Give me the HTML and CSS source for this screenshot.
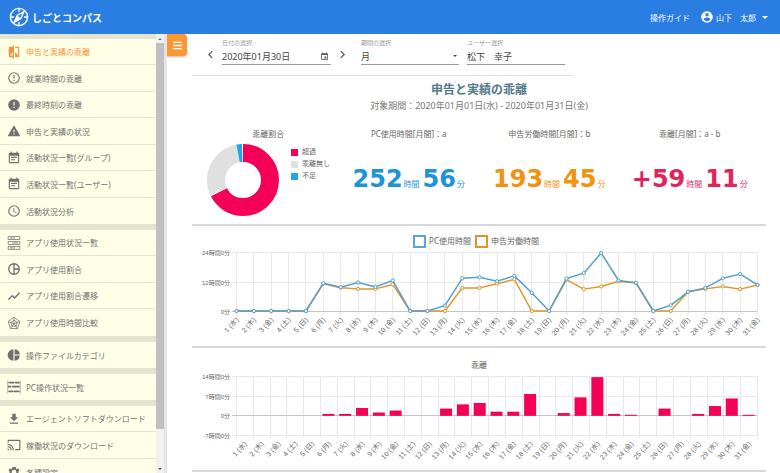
FILE: index.html
```html
<!DOCTYPE html>
<html lang="ja">
<head>
<meta charset="utf-8">
<meta name="viewport" content="width=device-width, initial-scale=1">
<title>しごとコンパス</title>
<link rel="stylesheet" href="styles.css">
</head>
<body>
<header class="topbar">
  <a class="brand" href="#">
    <svg class="brand-icon" viewBox="0 0 20 20" aria-hidden="true">
      <circle cx="10" cy="10" r="8.6" fill="none" stroke="#fff" stroke-width="1.4"/>
      <path d="M10 1v4M10 15v4M1 10h4M15 10h4" stroke="#fff" stroke-width="1.3"/>
      <path d="M15 4.6 11.8 11.6 5 15.4 8.2 8.4Z" fill="#2a7de1" stroke="#fff" stroke-width="1.3" stroke-linejoin="round"/>
      <path d="M8.2 8.4 11.8 11.6 5 15.4Z" fill="#fff"/>
    </svg>
    <span>しごとコンパス</span>
  </a>
  <nav class="account">
    <a href="#">操作ガイド</a>
    <button class="user" type="button">
      <svg class="user-icon" viewBox="0 0 24 24" aria-hidden="true"><path fill="#fff" d="M12 2a10 10 0 1 0 0 20 10 10 0 0 0 0-20zm0 3a3 3 0 1 1 0 6 3 3 0 0 1 0-6zm0 14.200a7.200 7.200 0 0 1-6-3.220c.03-1.990 4-3.080 6-3.080s5.970 1.090 6 3.080a7.200 7.200 0 0 1-6 3.220z"/></svg>
      <span>山下　太郎</span>
      <span class="caret"></span>
    </button>
  </nav>
</header>

<div class="layout">
  <nav class="sidebar">
    <ul class="group">
      <li><a class="active" href="#"><svg class="icon" viewBox="0 0 24 24"><path d="M10 3H5a2 2 0 0 0-2 2v14c0 1.100.9 2 2 2h5v2h2V1h-2v2zm0 15H5l5-6v6zm9-15h-5v2h5v13l-5-6v9h5a2 2 0 0 0 2-2V5a2 2 0 0 0-2-2z"/></svg>申告と実績の乖離</a></li>
      <li><a href="#"><svg class="icon" viewBox="0 0 24 24"><path d="M11 15h2v2h-2zm0-8h2v6h-2zm1-5a10 10 0 1 0 0 20 10 10 0 0 0 0-20zm0 18a8 8 0 1 1 0-16 8 8 0 0 1 0 16z"/></svg>就業時間の乖離</a></li>
      <li><a href="#"><svg class="icon" viewBox="0 0 24 24"><path d="M12 2a10 10 0 1 0 0 20 10 10 0 0 0 0-20zm1 15h-2v-2h2v2zm0-4h-2V7h2v6z"/></svg>最終時刻の乖離</a></li>
      <li><a href="#"><svg class="icon" viewBox="0 0 24 24"><path d="M1 21h22L12 2 1 21zm12-3h-2v-2h2v2zm0-4h-2v-4h2v4z"/></svg>申告と実績の状況</a></li>
      <li><a href="#"><svg class="icon" viewBox="0 0 24 24"><path d="M17 10H7v2h10v-2zm2-7h-1V1h-2v2H8V1H6v2H5a2 2 0 0 0-2 2v14c0 1.100.9 2 2 2h14a2 2 0 0 0 2-2V5a2 2 0 0 0-2-2zm0 16H5V8h14v11zm-5-5H7v2h7v-2z"/></svg>活動状況一覧(グループ)</a></li>
      <li><a href="#"><svg class="icon" viewBox="0 0 24 24"><path d="M17 10H7v2h10v-2zm2-7h-1V1h-2v2H8V1H6v2H5a2 2 0 0 0-2 2v14c0 1.100.9 2 2 2h14a2 2 0 0 0 2-2V5a2 2 0 0 0-2-2zm0 16H5V8h14v11zm-5-5H7v2h7v-2z"/></svg>活動状況一覧(ユーザー)</a></li>
      <li><a href="#"><svg class="icon" viewBox="0 0 24 24"><path d="M12 2a10 10 0 1 0 0 20 10 10 0 0 0 0-20zm0 18a8 8 0 1 1 0-16 8 8 0 0 1 0 16zm.5-13H11v6l5.250 3.150.75-1.230-4.500-2.670z"/></svg>活動状況分析</a></li>
    </ul>
    <ul class="group">
      <li><a href="#"><svg class="icon line" viewBox="0 0 24 24"><path d="M2 1h20v5H2zM2 9.500h20v5H2zM2 18h20v5H2zM5 3.500h9M9 12h10M5 20.500h9"/></svg>アプリ使用状況一覧</a></li>
      <li><a href="#"><svg class="icon line thick" viewBox="0 0 24 24"><path d="M12 3a9 9 0 1 0 0 18 9 9 0 0 0 0-18zM12 3v18M12 12h9"/></svg>アプリ使用割合</a></li>
      <li><a href="#"><svg class="icon line thick" viewBox="0 0 24 24"><path d="M2.500 18 9 11.500l4 4L21.500 6.500"/></svg>アプリ使用割合遷移</a></li>
      <li><a href="#"><svg class="icon line" viewBox="0 0 24 24"><path d="M12 2 22 9.500 18 21.500H6L2 9.500ZM12 7l5.500 4-2 6.500h-7l-2-6.500ZM12 2v11M22 9.500 12 13l6 8.500M2 9.500 12 13l-6 8.500"/></svg>アプリ使用時間比較</a></li>
    </ul>
    <ul class="group">
      <li><a href="#"><svg class="icon" viewBox="0 0 24 24"><path d="M11 2v20a10 10 0 0 1 0-20zm2 0v9h9a10 10 0 0 0-9-9zm0 11v9a10 10 0 0 0 9-9z"/></svg>操作ファイルカテゴリ</a></li>
    </ul>
    <ul class="group">
      <li><a href="#"><svg class="icon" viewBox="0 0 24 24"><path d="M1 1h1v22H1zM22 1h1v22h-1zM4 3h8v3H4zM14 3h7v3h-7zM2 10h5v3H2zM9 10h12v3H9zM4 18h6v3H4zM12 18h8v3h-8zM2 4h20v1H2zM2 11h20v1H2zM2 19h20v1H2z"/></svg>PC操作状況一覧</a></li>
    </ul>
    <ul class="group">
      <li><a href="#"><svg class="icon" viewBox="0 0 24 24"><path d="M19 9h-4V3H9v6H5l7 7 7-7zM5 18v2h14v-2H5z"/></svg>エージェントソフトダウンロード</a></li>
      <li><a href="#"><svg class="icon" viewBox="0 0 24 24"><path d="M21 3H3a2 2 0 0 0-2 2v3h2V5h18v14h-7v2h7a2 2 0 0 0 2-2V5a2 2 0 0 0-2-2zM1 18v3h3a3 3 0 0 0-3-3zm0-4v2a5 5 0 0 1 5 5h2a7 7 0 0 0-7-7zm0-4v2a9 9 0 0 1 9 9h2A11 11 0 0 0 1 10z"/></svg>稼働状況のダウンロード</a></li>
      <li><a href="#"><svg class="icon" viewBox="0 0 24 24"><path d="M19.400 13c.1-.7.100-1.300 0-2l2.100-1.600-2-3.500-2.500 1a7 7 0 0 0-1.700-1L15 3.300h-6l-.3 2.600a7 7 0 0 0-1.700 1l-2.500-1-2 3.500L4.600 11a8 8 0 0 0 0 2l-2.100 1.600 2 3.500 2.500-1 1.700 1 .3 2.600h6l.3-2.600 1.700-1 2.500 1 2-3.500zM12 16a4 4 0 1 1 0-8 4 4 0 0 1 0 8z"/></svg>各種設定</a></li>
    </ul>
  </nav>
  <div class="scrollbar" aria-hidden="true">
    <span class="arrow up"></span>
    <span class="thumb"></span>
    <span class="arrow down"></span>
  </div>

  <main class="main">
    <button class="menu-toggle" type="button" aria-label="メニュー"><svg viewBox="0 0 12 10"><path d="M1 1.500h10M1 5h10M1 8.500h10" stroke="#fff" stroke-width="1.500"/></svg></button>

    <form class="filters">
      <button class="step" type="button" aria-label="前の日"><svg viewBox="0 0 6 10"><path d="M5 1 1 5l4 4"/></svg></button>
      <div class="field">
        <label for="date">日付の選択</label>
        <div class="control">
          <input id="date" type="text" value="2020年01月30日">
          <svg class="calendar" viewBox="0 0 24 24"><path d="M19 3h-1V1h-2v2H8V1H6v2H5a2 2 0 0 0-2 2v14c0 1.100.9 2 2 2h14a2 2 0 0 0 2-2V5a2 2 0 0 0-2-2zm0 16H5V8h14v11zM12 12h5v5h-5z"/></svg>
        </div>
      </div>
      <button class="step" type="button" aria-label="次の日"><svg viewBox="0 0 6 10"><path d="M1 1l4 4-4 4"/></svg></button>
      <div class="field period">
        <label for="period">期間の選択</label>
        <div class="control">
          <select id="period"><option>月</option></select>
          <span class="caret"></span>
        </div>
      </div>
      <div class="field member">
        <label for="member">ユーザー選択</label>
        <div class="control"><input id="member" type="text" value="松下　幸子"></div>
      </div>
    </form>

    <div class="heading">
      <h1>申告と実績の乖離</h1>
      <p>対象期間：2020年01月01日(水) - 2020年01月31日(金)</p>
    </div>

    <section class="summary">
      <div class="kpi">
        <h2>乖離割合</h2>
        <div class="ratio">
          <svg class="donut" viewBox="0 0 72 72" role="img" aria-label="乖離割合">
            <g fill="none" stroke-width="18" transform="rotate(-90 36 36)">
              <circle cx="36" cy="36" r="27" pathLength="200" stroke="#f50057" stroke-dasharray="135 200"/>
              <circle cx="36" cy="36" r="27" pathLength="200" stroke="#e0e0e0" stroke-dasharray="58 200" stroke-dashoffset="-136"/>
              <circle cx="36" cy="36" r="27" pathLength="200" stroke="#1ea7ee" stroke-dasharray="5 200" stroke-dashoffset="-194"/>
            </g>
          </svg>
          <ul class="ratio-legend">
            <li class="over">超過</li>
            <li class="none">乖離無し</li>
            <li class="under">不足</li>
          </ul>
        </div>
      </div>
      <div class="kpi">
        <h2>PC使用時間[月間]：a</h2>
        <p class="value blue"><b>252</b>時間<b>56</b>分</p>
      </div>
      <div class="kpi">
        <h2>申告労働時間[月間]：b</h2>
        <p class="value orange"><b>193</b>時間<b>45</b>分</p>
      </div>
      <div class="kpi">
        <h2>乖離[月間]：a - b</h2>
        <p class="value pink"><b>+59</b>時間<b>11</b>分</p>
      </div>
    </section>

    <section class="panel">
      <ul class="series">
        <li class="pc">PC使用時間</li>
        <li class="reported">申告労働時間</li>
      </ul>
      <svg class="chart" id="hours" viewBox="0 0 574 90"></svg>
    </section>

    <section class="panel">
      <h2>乖離</h2>
      <svg class="chart" id="gap" viewBox="0 0 574 90"></svg>
    </section>
  </main>
</div>
<script src="charts.js"></script>
</body>
</html>
```
FILE: styles.css
```css
* { box-sizing: border-box; }

body {
  margin: 0;
  height: 100vh;
  display: flex;
  flex-direction: column;
  overflow: hidden;
  background: #fff;
  color: #666;
  font-family: "Noto Sans", "Noto Sans CJK JP", sans-serif;
  font-size: 8px;
}

h1, h2, p, ul { margin: 0; padding: 0; }
ul { list-style: none; }
a { color: inherit; text-decoration: none; }
button, input, select {
  margin: 0;
  padding: 0;
  border: 0;
  background: none;
  color: inherit;
  font: inherit;
}

.topbar {
  flex: none;
  height: 34px;
  padding: 0 12px 0 9px;
  display: flex;
  align-items: center;
  justify-content: space-between;
  background: #2a7de1;
  color: #fff;
}
.brand {
  display: flex;
  align-items: center;
  gap: 3px;
  font-size: 10px;
  font-weight: 700;
}
.brand-icon { width: 20px; height: 20px; }
.account { display: flex; align-items: center; gap: 10px; }
.user { display: flex; align-items: center; gap: 2px; }
.user-icon { width: 14px; height: 14px; }
.caret {
  border: 3px solid transparent;
  border-top-color: currentColor;
  border-bottom: 0;
}
.user .caret { margin-left: 4px; }

.layout { flex: 1; min-height: 0; display: flex; }

.sidebar {
  flex: none;
  width: 156px;
  padding-top: 5px;
  overflow: hidden;
  background: #e4e4cf;
}
.group { margin-bottom: 6px; background: #ffffe8; color: #707070; }
.group li { height: 26px; border-bottom: 1px solid #e6e6d4; }
.group li:nth-child(even) { height: 27px; }
.group li:last-child { border-bottom: 0; }
.group a {
  height: 100%;
  padding-left: 7px;
  display: flex;
  align-items: center;
  gap: 5px;
  white-space: nowrap;
}
.group .active { color: #f7923a; }
.icon { width: 14px; height: 14px; fill: currentColor; }
.icon.line { fill: none; stroke: currentColor; stroke-width: 1.3; }
.icon.thick { stroke-width: 2.3; }

.scrollbar {
  flex: none;
  width: 11px;
  display: flex;
  flex-direction: column;
  background: #f1f1f1;
  border-right: 3px solid #e4e4e4;
}
.arrow { height: 9px; display: grid; place-items: center; }
.arrow::before { content: ""; border: 2px solid transparent; }
.up::before { border-bottom-color: #4a7fc0; border-top: 0; }
.down::before { border-top-color: #555; border-bottom: 0; }
.thumb { height: 88%; background: #c1bfc1; }
.down { margin-top: auto; }

.main {
  position: relative;
  flex: 1;
  min-width: 0;
  padding: 0 14px 0 25px;
  overflow: hidden;
}
.menu-toggle {
  position: absolute;
  top: 0;
  left: 0;
  width: 20px;
  height: 22px;
  display: grid;
  place-items: center;
  border-radius: 0 4px 4px 0;
  background: #fb9734;
  box-shadow: 0 1px 2px #0004;
}
.menu-toggle svg { width: 11px; height: 9px; }

.filters {
  width: 382px;
  max-width: 100%;
  padding: 5px 9px 10px 14px;
  display: flex;
  align-items: flex-end;
  border-bottom: 1px solid #e4e4e4;
  color: #444;
}
.step { width: 9px; height: 19px; text-align: center; }
.step svg { width: 5px; height: 9px; fill: none; stroke: #555; stroke-width: 1.5; }
.field { flex: 1; min-width: 0; margin: 0 7px; }
.field label { display: block; font-size: 6px; line-height: 9px; color: #999; }
.field.period { margin: 0 8px 0 14px; flex: none; width: 98px; }
.field.member { margin: 0; flex: none; width: 98px; }
.control {
  height: 17px;
  padding-right: 2px;
  display: flex;
  align-items: center;
  border-bottom: 1px solid #999;
  font-size: 9px;
}
.control input, .control select { flex: 1; min-width: 0; appearance: none; }
.control .caret { border-width: 2px; border-bottom: 0; }
.calendar { width: 9px; height: 9px; fill: #555; }

.heading { padding: 5px 0 15px; text-align: center; }
h1 { font-size: 12px; line-height: 18px; color: #54788c; }
.heading p { font-size: 9px; line-height: 13px; color: #777; }
h2 { font-size: 8px; line-height: 14px; font-weight: 400; text-align: center; }

.summary {
  padding: 0 6px 8px;
  display: grid;
  grid-template-columns: repeat(4, 1fr);
  border-bottom: 2px solid #d8d8d8;
}
.ratio { padding: 3px 0 0 9px; display: flex; gap: 12px; }
.donut { width: 72px; height: 72px; }
.ratio-legend { padding-top: 2px; font-size: 7px; line-height: 12px; }
.ratio-legend li { display: flex; align-items: center; gap: 4px; white-space: nowrap; }
.ratio-legend li::before { content: ""; width: 7px; height: 7px; background: var(--key); }
.over { --key: #f50057; }
.none { --key: #e0e0e0; }
.under { --key: #1ea7ee; }
.value {
  padding-top: 24px;
  line-height: 28px;
  text-align: center;
  white-space: nowrap;
}
.value b {
  margin: 0 1px 0 3px;
  font-family: "DejaVu Sans", sans-serif;
  font-size: 24px;
}
.value b:first-child { margin-left: 0; }
.blue { color: #1c94d6; }
.orange { color: #f0930f; }
.pink { color: #e0245e; }

.panel { padding: 8px 0; border-bottom: 2px solid #d8d8d8; }
.panel h2 { padding-top: 2px; }
.series { display: flex; justify-content: center; gap: 4px; padding-right: 6px; line-height: 14px; }
.series li { display: flex; align-items: center; gap: 3px; }
.series li::before { content: ""; width: 9px; height: 9px; border: 2px solid var(--key); }
.pc { --key: #5aa5dc; }
.reported { --key: #e0962a; }

.chart { display: block; width: 100%; overflow: visible; font-family: "Liberation Sans", "Noto Sans CJK JP", sans-serif; }
.chart text { fill: #666; text-anchor: end; }
.y-label { font-size: 6px; }
.x-label { font-size: 7px; }
.grid { stroke: #e8e8e8; }
.zero { stroke: #c4c4c4; }
.bar { fill: #f50057; }
.trend { fill: none; stroke-width: 1.5; stroke-linejoin: round; }
.dot { fill: #fff; }
.trend.pc, .dot.pc { stroke: #559fd2; }
.trend.reported, .dot.reported { stroke: #e0962a; }
```
FILE: charts.js
```js
const LEFT = 44, RIGHT = 565, TOP = 4, BOTTOM = 63;
const weekdays = "水木金土日月火";
const pc = [0,0,0,0,0,11.3,9.7,11.6,9.8,12.4,0,0,2.2,13.3,13.7,12.1,14.3,7.4,0,13.2,15.4,23.6,12.4,11.5,0,2.3,7.8,9.4,13.3,15,10.6];
const reported = [0,0,0,0,0,11.1,9.5,9,9,10.8,0,0,0,9.4,9.4,11.1,12.9,0,0,12.8,8.9,10,12.1,11.4,0,0,7.8,9,10,8.9,10.6];
const gap = [0,0,0,0,0,.5,.5,2.6,1,1.7,0,0,2.4,3.9,4.4,1.3,1.3,7.6,0,.8,6.4,13.6,.5,.2,0,2.4,0,.5,3.3,6,.2];

function add(parent, tag, attrs, text) {
  const el = document.createElementNS("http://www.w3.org/2000/svg", tag);
  for (const key in attrs) el.setAttribute(key, attrs[key]);
  if (text) el.textContent = text;
  parent.append(el);
}

// Draws the grid and both axes; returns the value-to-y scale.
function axes(svg, ticks, divisions, labelShift) {
  const max = ticks[0], min = ticks[ticks.length - 1];
  const y = v => TOP + (max - v) / (max - min) * (BOTTOM - TOP);
  const step = (RIGHT - LEFT) / divisions;
  for (let i = 0; i <= divisions; i++) {
    const x = Math.round(LEFT + i * step) + .5;
    add(svg, "line", { x1: x, x2: x, y1: TOP, y2: BOTTOM + 3, class: "grid" });
  }
  for (const t of ticks) {
    const at = Math.round(y(t)) + .5;
    add(svg, "line", { x1: LEFT - 4, x2: RIGHT, y1: at, y2: at, class: t ? "grid" : "zero" });
    add(svg, "text", { x: LEFT - 6, y: at + 2, class: "y-label" }, (t ? t + "時間" : "") + "0分");
  }
  for (let i = 0; i < 31; i++) {
    const x = LEFT + (i + labelShift) * step + 3;
    add(svg, "text", { transform: `translate(${x} ${BOTTOM + 9}) rotate(-48)`, class: "x-label" }, `${i + 1} (${weekdays[i % 7]})`);
  }
  return y;
}

const hoursChart = document.getElementById("hours");
const hy = axes(hoursChart, [24, 12, 0], 30, 0);
const hx = i => LEFT + .5 + i * (RIGHT - LEFT) / 30;
for (const [name, data] of [["reported", reported], ["pc", pc]]) {
  add(hoursChart, "polyline", { points: data.map((v, i) => `${hx(i)},${hy(v)}`).join(" "), class: "trend " + name });
  data.forEach((v, i) => add(hoursChart, "circle", { cx: hx(i), cy: hy(v), r: 1.6, class: "dot " + name }));
}

const gapChart = document.getElementById("gap");
const gy = axes(gapChart, [14, 7, 0, -7], 31, .5);
const slot = (RIGHT - LEFT) / 31;
gap.forEach((v, i) => {
  if (v) add(gapChart, "rect", { x: LEFT + (i + .5) * slot - 6, y: gy(v), width: 12, height: gy(0) - gy(v) + .5, class: "bar" });
});
```
